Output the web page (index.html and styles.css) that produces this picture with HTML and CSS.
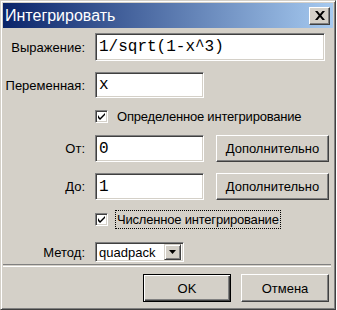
FILE: index.html
```html
<!DOCTYPE html>
<html lang="ru">
<head>
    <meta charset="UTF-8">
    <title>Интегрировать</title>
    <link rel="stylesheet" href="styles.css">
</head>
<body>
    <div class="window">
        <div class="titlebar">
            <span class="title">Интегрировать</span>
            <button class="close" type="button">
                <svg width="10" height="9" viewBox="0 0 10 9"><path d="M0 0h2.5l2.5 3 2.5-3h2.5l-3.7 4.5 3.7 4.5h-2.5l-2.5-3-2.5 3h-2.5l3.7-4.5z" fill="#000"/></svg>
            </button>
        </div>
        <form class="dialog">
            <div class="row row-expr">
                <label class="label">Выражение:</label>
                <input class="field field-wide mono" type="text" value="1/sqrt(1-x^3)">
            </div>
            <div class="row row-var">
                <label class="label">Переменная:</label>
                <input class="field field-short var mono" type="text" value="x">
            </div>
            <div class="row row-check1">
                <span class="label"></span>
                <span class="check"><svg width="7" height="7" viewBox="0 0 7 7"><path d="M0 2v3l2 2 5-5v-2l-5 5z" fill="#000"/></svg></span>
                <span class="check-text">Определенное интегрирование</span>
            </div>
            <div class="row row-from">
                <label class="label">От:</label>
                <input class="field field-short mono" type="text" value="0">
                <button class="btn btn-more" type="button">Дополнительно</button>
            </div>
            <div class="row row-to">
                <label class="label">До:</label>
                <input class="field field-short mono" type="text" value="1">
                <button class="btn btn-more" type="button">Дополнительно</button>
            </div>
            <div class="row row-check2">
                <span class="label"></span>
                <span class="check"><svg width="7" height="7" viewBox="0 0 7 7"><path d="M0 2v3l2 2 5-5v-2l-5 5z" fill="#000"/></svg></span>
                <span class="check-text focus">Численное интегрирование</span>
            </div>
            <div class="row row-method">
                <label class="label">Метод:</label>
                <div class="select">
                    <span class="select-text">quadpack</span>
                    <span class="select-btn"><svg width="7" height="4" viewBox="0 0 7 4"><path d="M0 0h7l-3.5 4z" fill="#000"/></svg></span>
                </div>
            </div>
            <div class="separator"></div>
            <div class="buttons">
                <button class="btn btn-ok" type="button">OK</button>
                <button class="btn btn-cancel" type="button">Отмена</button>
            </div>
        </form>
    </div>
</body>
</html>
```

FILE: styles.css
```css
body {
    margin: 0;
    background: #fff;
    font-family: "Liberation Sans", Arial, sans-serif;
    font-size: 13px;
    color: #000;
}
.window {
    width: 336px;
    height: 310px;
    box-sizing: border-box;
    background: #d4d0c8;
    border: 1px solid;
    border-color: #d4d0c8 #404040 #404040 #d4d0c8;
    box-shadow: inset 1px 1px #fff, inset -1px -1px #808080;
    padding: 2px;
}
.titlebar {
    height: 25px;
    display: flex;
    align-items: center;
    background: linear-gradient(to right, #0a246a, #a6caf0);
    padding-left: 2px;
}
.title {
    flex: 1;
    color: #fff;
    font-size: 16px;
}
.close {
    width: 21px;
    height: 18px;
    margin-right: 3px;
    padding: 0;
    display: flex;
    align-items: center;
    justify-content: center;
    background: #d4d0c8;
    border: 1px solid;
    border-color: #fff #404040 #404040 #fff;
    box-shadow: inset -1px -1px #808080;
}
.dialog {
    margin: 0;
}
.row {
    display: flex;
    align-items: center;
}
.label {
    width: 82px;
    margin-right: 10px;
    text-align: right;
    flex: none;
}
.field {
    box-sizing: border-box;
    margin: 0;
    background: #fff;
    border: 1px solid;
    border-color: #808080 #fff #fff #808080;
    box-shadow: inset 1px 1px #404040, inset -1px -1px #d4d0c8;
    padding: 0 0 0 3px;
    outline: none;
    color: #000;
}
.mono {
    font-family: "Liberation Mono", "Courier New", monospace;
    font-size: 16px;
}
.field-wide {
    width: 230px;
    height: 28px;
}
.field-short {
    width: 109px;
    height: 27px;
}
.var {
    height: 26px;
}
.row-expr {
    margin-top: 5px;
}
.row-var {
    margin-top: 11px;
}
.row-check1 {
    margin-top: 10px;
    height: 17px;
}
.row-from {
    margin-top: 10px;
}
.row-to {
    margin-top: 11px;
}
.row-check2 {
    margin-top: 10px;
    height: 18px;
}
.row-method {
    margin-top: 14px;
}
.check {
    width: 13px;
    height: 13px;
    box-sizing: border-box;
    background: #fff;
    border: 1px solid;
    border-color: #808080 #fff #fff #808080;
    box-shadow: inset 1px 1px #404040, inset -1px -1px #d4d0c8;
    display: flex;
    align-items: center;
    justify-content: center;
    flex: none;
}
.check-text {
    margin-left: 7px;
    padding: 1px 1px;
    border: 1px dotted transparent;
    letter-spacing: -0.2px;
}
.check-text.focus {
    border-color: #000;
}
.btn {
    box-sizing: border-box;
    margin: 0;
    padding: 0;
    background: #d4d0c8;
    font-family: "Liberation Sans", Arial, sans-serif;
    font-size: 13px;
    color: #000;
    border: 1px solid;
    border-color: #fff #404040 #404040 #fff;
    box-shadow: inset -1px -1px #808080, inset 1px 1px #d4d0c8;
}
.btn-more {
    width: 113px;
    height: 27px;
    margin-left: 12px;
}
.select {
    width: 89px;
    height: 20px;
    box-sizing: border-box;
    background: #fff;
    border: 1px solid;
    border-color: #808080 #fff #fff #808080;
    box-shadow: inset 1px 1px #404040, inset -1px -1px #d4d0c8;
    display: flex;
    align-items: center;
    padding: 2px;
}
.select-text {
    flex: 1;
    padding-left: 1px;
}
.select-btn {
    width: 17px;
    height: 16px;
    box-sizing: border-box;
    background: #d4d0c8;
    border: 1px solid;
    border-color: #d4d0c8 #404040 #404040 #d4d0c8;
    box-shadow: inset 1px 1px #fff, inset -1px -1px #808080;
    display: flex;
    align-items: center;
    justify-content: center;
}
.separator {
    margin-top: 2px;
    height: 1px;
    border-top: 1px solid #808080;
    border-bottom: 1px solid #fff;
    margin-right: 2px;
}
.buttons {
    display: flex;
    justify-content: flex-end;
    margin-top: 7px;
    padding-right: 4px;
    gap: 10px;
}
.btn-ok {
    width: 88px;
    height: 28px;
    border-color: #000;
    box-shadow: inset 1px 1px #fff, inset -1px -1px #404040, inset -2px -2px #808080;
}
.btn-cancel {
    width: 88px;
    height: 28px;
}
```
